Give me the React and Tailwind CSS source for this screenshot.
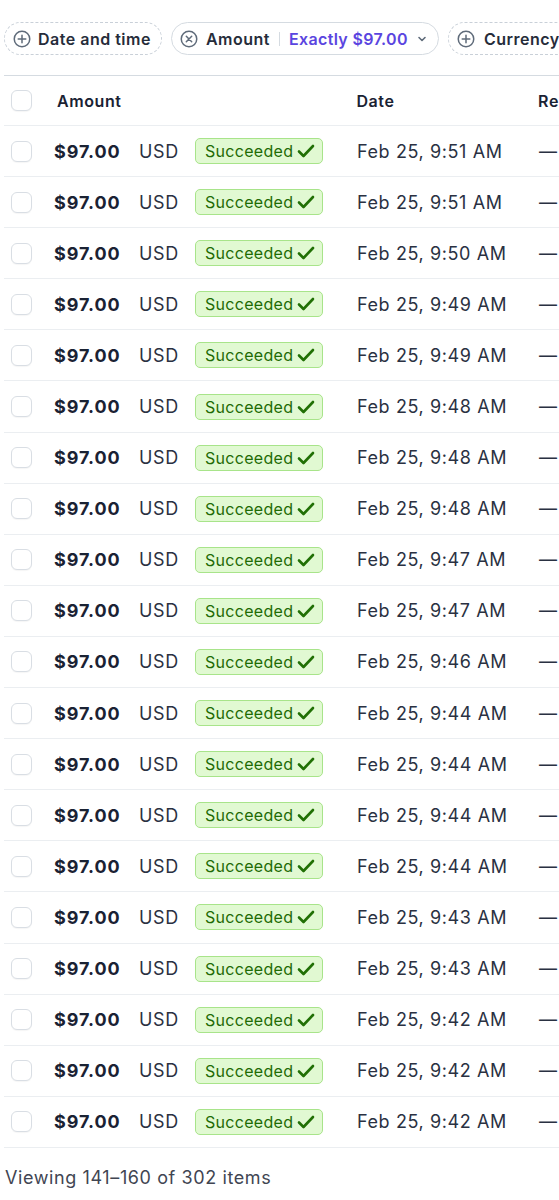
import React from "react";

const times = [
  "9:51","9:51","9:50","9:49","9:49","9:48","9:48","9:48","9:47","9:47",
  "9:46","9:44","9:44","9:44","9:44","9:43","9:43","9:42","9:42","9:42",
];

function CirclePlus() {
  return (
    <svg width="18" height="18" viewBox="0 0 18 18" fill="none" stroke="#5f6b7a" strokeWidth="1.5">
      <circle cx="9" cy="9" r="7.75" />
      <path d="M9 5.2v7.6M5.2 9h7.6" strokeLinecap="round" />
    </svg>
  );
}

function CircleX() {
  return (
    <svg width="18" height="18" viewBox="0 0 18 18" fill="none" stroke="#5f6b7a" strokeWidth="1.5">
      <circle cx="9" cy="9" r="7.75" />
      <path d="M6.3 6.3l5.4 5.4M11.7 6.3l-5.4 5.4" strokeLinecap="round" />
    </svg>
  );
}

function Check() {
  return (
    <svg width="18" height="16" viewBox="0 0 18 16" fill="none" stroke="#217005" strokeWidth="2.6" strokeLinecap="round" strokeLinejoin="round">
      <path d="M2 8.5l4.5 4.5L16 3" />
    </svg>
  );
}

function Checkbox() {
  return <div className="w-[21px] h-[21px] rounded-[6px] border border-[#d9dee4] bg-white shadow-[0_1px_1px_rgba(0,0,0,0.04)] shrink-0" />;
}

export default function App() {
  return (
    <div className="w-[559px] h-[1200px] overflow-hidden bg-white text-[#1a2233]" style={{ fontFamily: "Inter, 'Noto Sans', sans-serif" }}>
      <div className="flex items-center gap-[9px] pt-[22px] pl-[4px] whitespace-nowrap">
        <div className="flex items-center h-[33px] rounded-full border border-dashed border-[#c9d0d8] pl-[8px] pr-[10px] gap-[7px] shrink-0">
          <CirclePlus />
          <span className="text-[16px] font-semibold tracking-[0.5px] text-[#262c3a]">Date and time</span>
        </div>
        <div className="flex items-center h-[33px] rounded-full border border-[#d5dbe1] pl-[8px] pr-[10px] shrink-0">
          <CircleX />
          <span className="ml-[8px] text-[16px] font-semibold tracking-[0.5px] text-[#262c3a]">Amount</span>
          <span className="mx-[9px] w-px h-[14px] bg-[#d5dbe1]" />
          <span className="text-[16px] font-semibold tracking-[0.35px] text-[#5a45e0]">Exactly $97.00</span>
          <svg className="ml-[8px]" width="12" height="12" viewBox="0 0 12 12" fill="none" stroke="#5f6b7a" strokeWidth="1.6" strokeLinecap="round" strokeLinejoin="round">
            <path d="M3 4.5l3 3 3-3" />
          </svg>
        </div>
        <div className="flex items-center h-[33px] rounded-full border border-dashed border-[#c9d0d8] pl-[8px] pr-[11px] gap-[9px] shrink-0">
          <CirclePlus />
          <span className="text-[16px] font-semibold tracking-[0.5px] text-[#262c3a]">Currency</span>
        </div>
      </div>

      <div className="mt-[20px] ml-[4px] border-t border-[#d5dbe1]">
        <div className="flex items-center h-[50px] border-b border-[#ebeef1] whitespace-nowrap">
          <div className="pl-[7px] w-[53px]"><Checkbox /></div>
          <div className="w-[300px] text-[16px] font-semibold tracking-[0.6px]">Amount</div>
          <div className="w-[182px] text-[16px] font-semibold tracking-[0.6px]">Date</div>
          <div className="text-[16px] font-semibold tracking-[0.6px]">Re</div>
        </div>
        {times.map((t, i) => (
          <div key={i} className="flex items-center h-[51.1px] border-b border-[#ebeef1] whitespace-nowrap">
            <div className="pl-[7px] w-[50px]"><Checkbox /></div>
            <div className="w-[85px] text-[18px] font-bold tracking-[0.9px]">$97.00</div>
            <div className="w-[56px] text-[18px] tracking-[0.6px] text-[#2a3142]">USD</div>
            <div className="w-[162px]">
              <span className="inline-flex items-center h-[26px] pl-[9px] pr-[7px] gap-[4px] rounded-[5px] border border-[#a8e48a] bg-[#e1f9d2] text-[16px] tracking-[0.3px] text-[#1f6b05]">
                Succeeded
                <Check />
              </span>
            </div>
            <div className="w-[182px] text-[18px] tracking-[0.6px] text-[#2a3142]">Feb 25, {t} AM</div>
            <div className="text-[18px] text-[#2a3142]">—</div>
          </div>
        ))}
      </div>
      <div className="pl-[5px] pt-[16px] text-[18px] tracking-[0.6px] text-[#414552]">Viewing 141–160 of 302 items</div>
    </div>
  );
}
